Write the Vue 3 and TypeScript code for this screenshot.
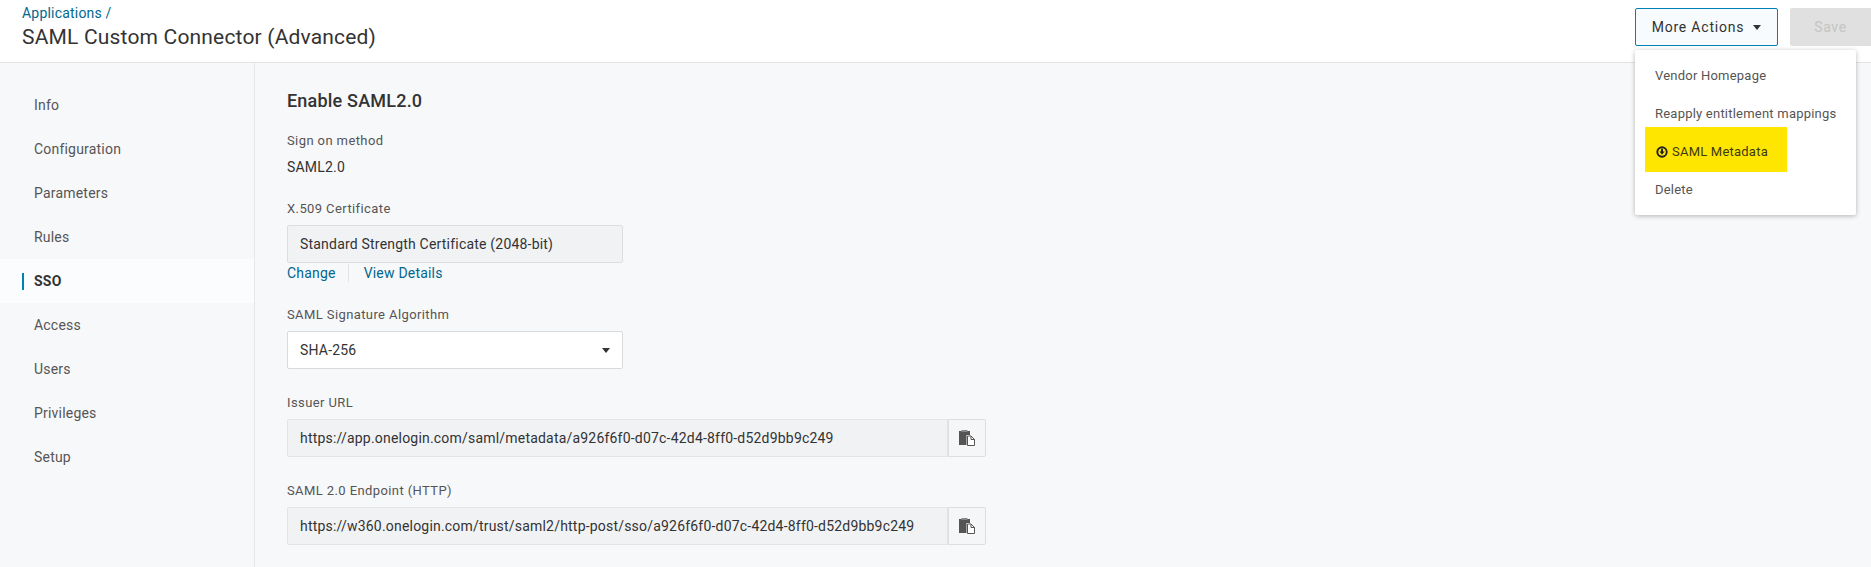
<script setup lang="ts">
const nav: string[] = ['Info', 'Configuration', 'Parameters', 'Rules', 'SSO', 'Access', 'Users', 'Privileges', 'Setup']
</script>

<template>
  <div class="page">
    <header class="top">
      <div class="heading">
        <a class="crumb">Applications /</a>
        <h1 class="title">SAML Custom Connector (Advanced)</h1>
      </div>
      <div class="actions">
        <div class="more-wrap">
          <button class="more">More Actions<span class="caret"></span></button>
          <div class="menu">
            <div class="item">Vendor Homepage</div>
            <div class="item">Reapply entitlement mappings</div>
            <div class="item meta">
              <span class="mark"></span>
              <svg class="dl" viewBox="0 0 12 12" width="12" height="12">
                <circle cx="6" cy="6" r="4.7" fill="none" stroke="#222" stroke-width="1.9" />
                <path d="M5 2.800h2v2.800h1.500L6 8.800 3.500 5.600H5z" fill="#222" />
              </svg>
              <span class="meta-text">SAML Metadata</span>
            </div>
            <div class="item">Delete</div>
          </div>
        </div>
        <button class="save">Save</button>
      </div>
    </header>
    <div class="body">
      <nav class="side">
        <div v-for="n in nav" :key="n" class="nav" :class="{ active: n === 'SSO' }">
          <span class="nav-text">{{ n }}</span>
        </div>
      </nav>
      <main class="main">
        <h2 class="section">Enable SAML2.0</h2>
        <div class="label first">Sign on method</div>
        <div class="plain">SAML2.0</div>
        <div class="label cert-label">X.509 Certificate</div>
        <div class="field cert">Standard Strength Certificate (2048-bit)</div>
        <div class="links"><a class="link">Change</a><a class="link second">View Details</a></div>
        <div class="label algo-label">SAML Signature Algorithm</div>
        <div class="field select">SHA-256<span class="caret small"></span></div>
        <div class="label url-label">Issuer URL</div>
        <div class="copy-row">
          <div class="field url">https://app.onelogin.com/saml/metadata/a926f6f0-d07c-42d4-8ff0-d52d9bb9c249</div>
          <button class="copy" aria-label="Copy">
            <svg viewBox="0 0 18 18" width="18" height="18">
              <path d="M1 2h11v4H8.500v10H1z" fill="#555" />
              <rect x="3.500" y="1" width="6" height="2" fill="#888" />
              <path d="M9.500 7H13l3.500 3.500V16.500H9.500z" fill="#fff" stroke="#555" stroke-width="1" />
              <path d="M13 7v3.500h3.500" fill="none" stroke="#555" stroke-width="1" />
            </svg>
          </button>
        </div>
        <div class="label url-label">SAML 2.0 Endpoint (HTTP)</div>
        <div class="copy-row">
          <div class="field url">https://w360.onelogin.com/trust/saml2/http-post/sso/a926f6f0-d07c-42d4-8ff0-d52d9bb9c249</div>
          <button class="copy" aria-label="Copy">
            <svg viewBox="0 0 18 18" width="18" height="18">
              <path d="M1 2h11v4H8.500v10H1z" fill="#555" />
              <rect x="3.500" y="1" width="6" height="2" fill="#888" />
              <path d="M9.500 7H13l3.500 3.500V16.500H9.500z" fill="#fff" stroke="#555" stroke-width="1" />
              <path d="M13 7v3.500h3.500" fill="none" stroke="#555" stroke-width="1" />
            </svg>
          </button>
        </div>
      </main>
    </div>
  </div>
</template>

<style>
html, body { margin: 0; background: #f7f8fa; }
</style>

<style scoped>
.page {
  width: 1871px;
  height: 567px;
  overflow: hidden;
  font-family: Roboto, "Liberation Sans", sans-serif;
  font-size: 14px;
  color: #333;
  letter-spacing: 0.2px;
  background: #f7f8fa;
  display: flex;
  flex-direction: column;
}
.top {
  height: 62px;
  flex: none;
  background: #fff;
  border-bottom: 1px solid #e1e3e5;
  display: flex;
  justify-content: space-between;
}
.heading { padding: 5px 0 0 22px; }
.crumb { display: block; color: #00678f; font-size: 14px; line-height: 16px; }
.title { margin: 3px 0 0; font-weight: 400; font-size: 21px; line-height: 26px; color: #333; letter-spacing: 0.18px; }
.actions { display: flex; align-items: flex-start; gap: 12px; padding-top: 8px; }
.more-wrap { position: relative; }
.more {
  width: 143px;
  height: 38px;
  box-sizing: border-box;
  background: #f7fbfd;
  border: 1px solid #0081b5;
  border-radius: 2px;
  font: inherit;
  font-size: 14px;
  letter-spacing: 0.8px;
  color: #333;
  padding: 0;
  display: flex;
  align-items: center;
  justify-content: center;
  gap: 9px;
}
.caret {
  width: 0;
  height: 0;
  border-left: 4.500px solid transparent;
  border-right: 4.500px solid transparent;
  border-top: 5px solid #333;
}
.save {
  width: 81px;
  height: 38px;
  box-sizing: border-box;
  background: #e0e0e0;
  border: 0;
  border-radius: 2px 0 0 2px;
  font: inherit;
  letter-spacing: 0.6px;
  color: #c4c4c4;
  padding: 0;
}
.menu {
  position: absolute;
  top: 42px;
  left: 0;
  width: 221px;
  height: 165px;
  box-sizing: border-box;
  padding: 7px 0;
  background: #fff;
  border-radius: 2px;
  box-shadow: 0 1px 5px rgba(0, 0, 0, 0.28);
  z-index: 2;
}
.item {
  position: relative;
  height: 38px;
  line-height: 38px;
  padding-left: 20px;
  font-size: 13px;
  color: #555;
  letter-spacing: 0.22px;
  white-space: nowrap;
}
.meta { display: flex; align-items: center; gap: 4px; padding-left: 21px; color: #3c3a10; }
.meta .dl, .meta-text { position: relative; z-index: 1; }
.mark {
  position: absolute;
  left: 10px;
  top: -6px;
  width: 142px;
  height: 45px;
  background: #ffe600;
}
.body { flex: 1; display: flex; min-height: 0; }
.side {
  width: 254px;
  flex: none;
  border-right: 1px solid #e6e8ea;
  padding-top: 20px;
}
.nav {
  height: 44px;
  display: flex;
  align-items: center;
  padding-left: 34px;
  position: relative;
  color: #555;
}
.active { background: #fafcfd; font-weight: 700; color: #333; }
.active::before {
  content: "";
  position: absolute;
  left: 22px;
  top: 14px;
  width: 2px;
  height: 17px;
  background: #0081b5;
}
.main { flex: 1; padding: 28px 0 0 32px; }
.section { margin: 0; font-size: 18px; line-height: 20px; font-weight: 500; color: #333; }
.label { font-size: 13px; line-height: 16px; color: #555; letter-spacing: 0.4px; }
.first { margin-top: 22px; }
.plain { margin-top: 10px; font-size: 14px; line-height: 16px; }
.cert-label { margin-top: 26px; }
.field {
  box-sizing: border-box;
  height: 38px;
  line-height: 36px;
  padding: 0 12px;
  border: 1px solid #e3e4e6;
  border-radius: 2px;
  background: #f1f2f4;
  white-space: nowrap;
}
.cert, .select { width: 336px; margin-top: 8px; }
.cert { border-color: #dcdddf; }
.links { margin-top: 1px; height: 18px; line-height: 18px; display: flex; }
.link { color: #00678f; }
.second { margin-left: 12px; padding-left: 15px; border-left: 1px solid #e1e3e5; }
.algo-label { margin-top: 25px; }
.select {
  background: #fff;
  border-color: #d9dadc;
  display: flex;
  align-items: center;
  justify-content: space-between;
}
.url-label { margin-top: 26px; }
.copy-row { display: flex; margin-top: 8px; }
.url { width: 661px; border-radius: 2px 0 0 2px; }
.copy {
  width: 38px;
  height: 38px;
  box-sizing: border-box;
  padding: 0;
  border: 1px solid #dddee0;
  border-radius: 0 2px 2px 0;
  background: #f5f6f8;
  display: flex;
  align-items: center;
  justify-content: center;
}
</style>
